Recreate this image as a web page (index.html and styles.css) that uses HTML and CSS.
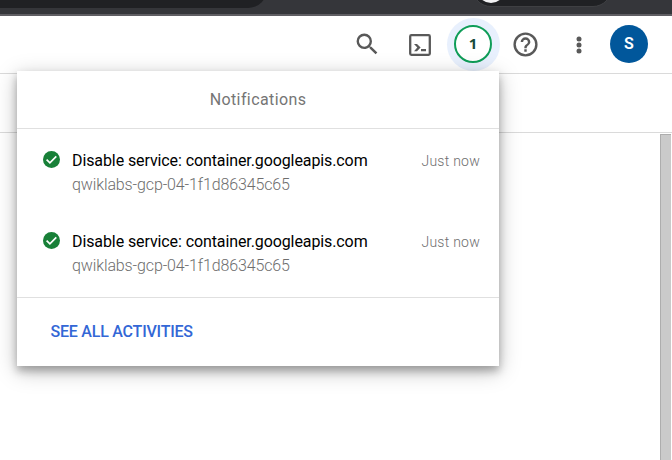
FILE: index.html
```html
<!DOCTYPE html>
<html lang="en">
<head>
<meta charset="utf-8">
<title>Notifications</title>
<link rel="stylesheet" href="styles.css">
</head>
<body>
<div class="browser-bar">
  <div class="address"></div>
  <div class="profile"><span class="profile-dot"></span></div>
</div>
<header class="toolbar">
  <div class="cell"><svg class="icon-search" viewBox="0 0 24 24"><path d="M15.5 14h-.79l-.28-.27A6.47 6.47 0 0 0 16 9.5 6.5 6.5 0 1 0 9.5 16c1.61 0 3.09-.59 4.23-1.57l.27.28v.79l5 4.99L20.49 19l-4.99-5zm-6 0a4.5 4.5 0 1 1 0-9 4.5 4.5 0 0 1 0 9z"/></svg></div>
  <div class="cell"><svg class="icon-shell" viewBox="0 0 22 22"><rect x="1.2" y="1.2" width="19.6" height="19.6" rx="1.2" fill="none" stroke="currentColor" stroke-width="2.3"/><path d="M5 10h3l3.6 3.6L8 17.2H5l3.3-3.6zM12 15h5v2.2h-5z"/></svg></div>
  <div class="cell"><div class="halo"><div class="count">1</div></div></div>
  <div class="cell"><svg class="icon-help" viewBox="0 0 24 24"><path d="M11 18h2v-2h-2v2zm1-16a10 10 0 1 0 0 20 10 10 0 0 0 0-20zm0 18a8 8 0 1 1 0-16 8 8 0 0 1 0 16zm0-14a4 4 0 0 0-4 4h2a2 2 0 1 1 4 0c0 2-3 1.75-3 5h2c0-2.25 3-2.5 3-5a4 4 0 0 0-4-4z"/></svg></div>
  <div class="cell"><svg class="icon-more" viewBox="0 0 6 18"><circle cx="3" cy="3" r="2.5"/><circle cx="3" cy="9" r="2.5"/><circle cx="3" cy="15" r="2.5"/></svg></div>
  <div class="cell cell-avatar"><div class="avatar">S</div></div>
</header>
<div class="subbar"></div>
<main class="content"><div class="scrollbar"></div></main>

<section class="panel">
  <h1 class="panel-title">Notifications</h1>
  <ul class="list">
    <li class="item">
      <svg class="check" viewBox="0 0 17 17"><circle cx="8.5" cy="8.5" r="8.5"/><path d="M3.6 8.7l3.3 3.2 6.4-6.5"/></svg>
      <div class="body"><div class="name"><span>Disable service: container.googleapis.com</span></div><div class="project"><span>qwiklabs-gcp-04-1f1d86345c65</span></div></div>
      <time class="time">Just now</time>
    </li>
    <li class="item">
      <svg class="check" viewBox="0 0 17 17"><circle cx="8.5" cy="8.5" r="8.5"/><path d="M3.6 8.7l3.3 3.2 6.4-6.5"/></svg>
      <div class="body"><div class="name"><span>Disable service: container.googleapis.com</span></div><div class="project"><span>qwiklabs-gcp-04-1f1d86345c65</span></div></div>
      <time class="time">Just now</time>
    </li>
  </ul>
  <footer class="panel-footer"><a class="see-all">SEE ALL ACTIVITIES</a></footer>
</section>
</body>
</html>
```
FILE: styles.css
```css
* { box-sizing: border-box; }
body {
  margin: 0;
  height: 460px;
  overflow: hidden;
  display: flex;
  flex-direction: column;
  position: relative;
  background: #fff;
  font-family: Roboto, "Liberation Sans", sans-serif;
}
.browser-bar {
  height: 16px;
  flex: none;
  display: flex;
  align-items: flex-start;
  overflow: hidden;
  background: #35363a;
  border-bottom: 2px solid #5f5e63;
}
.address {
  width: 267px;
  height: 38px;
  margin-top: -30px;
  border-radius: 0 19px 19px 0;
  background: #202124;
}
.profile {
  width: 140px;
  height: 38px;
  margin: -31px 0 0 205px;
  padding: 5px 0 0 4px;
  border-radius: 19px;
  background: #202124;
  border: 1px solid #3f4043;
}
.profile-dot {
  display: block;
  width: 28px;
  height: 28px;
  border-radius: 50%;
  background: #f1f1f3;
}
.toolbar {
  height: 58px;
  flex: none;
  display: flex;
  justify-content: flex-end;
  padding-right: 19px;
  border-bottom: 1px solid #dadada;
}
.cell {
  width: 52.8px;
  height: 56px;
  display: flex;
  align-items: center;
  justify-content: center;
  color: #595959;
  fill: currentColor;
}
.cell-avatar { width: 48px; }
.icon-search { width: 28.5px; height: 28.5px; }
.icon-shell { width: 22px; height: 22px; margin-top: 2px; }
.icon-help { width: 29px; height: 29px; margin-top: 1px; }
.icon-more { width: 6px; height: 18px; margin-top: 1px; }
.halo {
  flex: none;
  width: 53px;
  height: 53px;
  display: flex;
  align-items: center;
  justify-content: center;
  border-radius: 50%;
  background: #e8f0fd;
}
.count {
  width: 38px;
  height: 38px;
  border: 2px solid #0f9d58;
  border-radius: 50%;
  background: #fff;
  color: #174b3b;
  font: 700 15px/33px "Open Sans", sans-serif;
  text-align: center;
}
.avatar {
  width: 38px;
  height: 38px;
  border-radius: 50%;
  background: #01579b;
  color: #fff;
  font-size: 16px;
  font-weight: 600;
  line-height: 38px;
  text-align: center;
}
.subbar {
  height: 59px;
  flex: none;
  border-bottom: 1px solid #dadada;
}
.content {
  flex: 1;
  display: flex;
  justify-content: flex-end;
  padding: 1px 1px 0 0;
}
.scrollbar {
  width: 11px;
  background: #cacaca;
  border-top: 1px solid #adadad;
  border-left: 1px solid #adadad;
}
.panel {
  position: absolute;
  left: 17px;
  top: 71px;
  width: 482px;
  height: 295px;
  background: #fff;
  box-shadow: 0 5px 20px rgba(0, 0, 0, .26), 0 5px 8px rgba(0, 0, 0, .26);
}
.panel-title {
  height: 58px;
  margin: 0;
  border-bottom: 1px solid #e0e0e0;
  color: #757575;
  font-size: 16px;
  font-weight: 440;
  line-height: 57px;
  letter-spacing: .4px;
  text-align: center;
}
.list {
  height: 169px;
  margin: 0;
  padding: 19px 19px 0 26px;
  list-style: none;
  border-bottom: 1px solid #e0e0e0;
}
.item {
  height: 81px;
  display: flex;
  align-items: flex-start;
}
.check {
  width: 17px;
  height: 17px;
  margin: 3px 12px 0 0;
  fill: #188038;
}
.check path { fill: none; stroke: #fff; stroke-width: 1.7; }
.body { flex: 1; padding-top: 1px; }
.name {
  color: #000;
  font-size: 16px;
  font-weight: 450;
  line-height: 24px;
  letter-spacing: -.1px;
}
.project {
  color: #6e6e6e;
  font-size: 16px;
  font-weight: 360;
  line-height: 24px;
  letter-spacing: -.13px;
}
.time {
  color: #6e6e6e;
  font-size: 14px;
  font-weight: 360;
  line-height: 26px;
  letter-spacing: .25px;
}
.panel-footer { padding: 22px 33.5px; }
.see-all {
  color: #3367d6;
  font-size: 16px;
  font-weight: 500;
  line-height: 24px;
  letter-spacing: -.22px;
}
```
